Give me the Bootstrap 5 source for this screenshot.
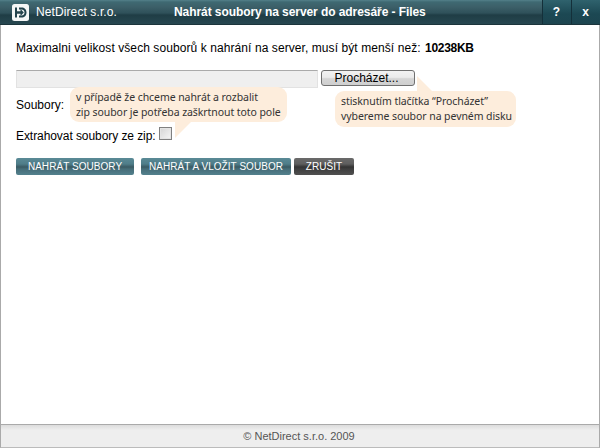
<!DOCTYPE html>
<html lang="cs"><head><meta charset="utf-8"><title>Nahrát soubory</title>
<link href="https://cdn.jsdelivr.net/npm/bootstrap@5.3.0/dist/css/bootstrap.min.css" rel="stylesheet">
<style>
html,body{height:448px;overflow:hidden;}
body{font-family:"Liberation Sans",Arial,sans-serif;font-size:12px;line-height:14px;color:#000;background:#fff;}
.shell{height:448px;}
.topbar{height:25px;flex:none;color:#fff;background:linear-gradient(#54808a 0,#3f6972 2px,#3c5f68 7px,#2f515a 13px,#1f3d45 15px,#274750 24px);border-bottom:1px solid #1c353c;}
.logo-box{width:17px;height:17px;margin:4px 0 0 12px;flex:none;}
.brand{margin-left:7px;width:124px;flex:none;line-height:24px;font-size:12px;letter-spacing:.1px;}
.win-title{font-weight:700;line-height:24px;margin-left:14px;font-size:12px;letter-spacing:-.07px;white-space:nowrap;}
.ctl{width:29px;flex:none;line-height:24px;padding-right:1px;text-align:center;font-weight:700;font-size:12px;background:linear-gradient(#2f626d,#1c4853 14px,#1d4550);border-left:1px solid #14303a;}
.mainarea{flex:1;border-left:1px solid #aaa;border-right:1px solid #aaa;padding:16px 15px 0;position:relative;}
.limit{height:14px;letter-spacing:.08px;white-space:nowrap;}
.limit b{margin-left:1px;letter-spacing:-.3px;}
.filefield{margin-top:15px;height:18px;}
.fakeinput{width:302px;height:18px;background:#efefef;border:1px solid #e2e2e2;border-top:1px solid #aaa;}
.browse{width:94px;height:16px;margin-left:3px;padding:0 3px 0 0;border:1px solid #707070;border-radius:3px;font-size:12px;line-height:13px;color:#000;background:linear-gradient(#f2f2f2,#ebebeb 45%,#d5d5d5 55%,#cfcfcf);}
.row-lbl{margin-top:10px;height:14px;}
.row-ext{margin-top:17px;height:14px;align-items:center;letter-spacing:-.07px;}
.fakecheck{width:13px;height:13px;margin:-5px 0 0 3px;border:1px solid #808080;background:linear-gradient(135deg,#d4d4d4,#f6f6f6);box-shadow:inset 0 0 0 1px #e4e4e4;}
.actions{margin-top:15px;gap:7px;}
.actbtn{height:17px;padding:0;border:0;border-radius:2px;color:#fff;font-size:10px;letter-spacing:.05px;line-height:17px;text-align:center;white-space:nowrap;}
.teal{background:linear-gradient(#5a8a96,#4f7d89 6px,#3a5a63 9px,#466d78 11px,#53818d 17px);}
.grey{background:linear-gradient(#6a6a6a,#5e5e5e 6px,#333 9px,#3e3e3e 11px,#505050 17px);}
.b1{width:118px}.b2{width:150px;margin-right:-4px}.b3{width:60px}
.bubble{position:absolute;background:#fdeddc;border-radius:9px;font-family:"Noto Sans",sans-serif;font-size:10.5px;letter-spacing:-.07px;line-height:15px;color:#333;padding:3px 6px;white-space:nowrap;}
.bubble-a{left:69px;top:62px;width:217px;height:35px;}
.bubble-b{left:334px;top:66px;width:181px;height:36px;}
.tail{position:absolute;display:block;overflow:visible;}
.tail-a{left:105px;top:35px;}
.tail-b{left:82px;top:-15px;}
.footbar{height:24px;flex:none;padding-right:2px;background:linear-gradient(#dcdcdc,#eee 5px);border:1px solid #aaa;border-bottom-color:#bbb;text-align:center;font-size:11px;line-height:22px;color:#555;}
</style></head>
<body>
<div class="shell d-flex flex-column">
  <div class="topbar d-flex">
    <svg class="logo-box" viewBox="0 0 17 17" aria-hidden="true"><rect width="17" height="17" rx="2.5" fill="#f4f6f6"/><path d="M3 3.500h2v10H3zM7 3.500h2.500c3 0 5 2 5 5s-2 5-5 5H7v-2h2.500c1.800 0 3-1.300 3-3s-1.200-3-3-3H7z" fill="#23434c"/><path d="M5 7.300h3.500V5l3.300 3.500-3.300 3.500V9.700H5z" fill="#23434c"/></svg>
    <div class="brand">NetDirect s.r.o.</div>
    <div class="win-title flex-grow-1">Nahrát soubory na server do adresáře - Files</div>
    <div class="ctl">?</div>
    <div class="ctl">x</div>
  </div>
  <div class="mainarea">
    <div class="limit">Maximalni velikost všech souborů k nahrání na server, musí být menší než: <b>10238KB</b></div>
    <div class="filefield d-flex align-items-start">
      <div class="fakeinput"></div>
      <button type="button" class="browse">Procházet...</button>
    </div>
    <div class="row-lbl">Soubory:</div>
    <div class="row-ext d-flex">Extrahovat soubory ze zip: <span class="fakecheck d-block"></span></div>
    <div class="actions d-flex">
      <button type="button" class="actbtn teal b1">NAHRÁT SOUBORY</button>
      <button type="button" class="actbtn teal b2">NAHRÁT A VLOŽIT SOUBOR</button>
      <button type="button" class="actbtn grey b3">ZRUŠIT</button>
    </div>
    <div class="bubble bubble-a">v případě že chceme nahrát a rozbalit<br>zip soubor je potřeba zaškrtnout toto pole
      <svg class="tail tail-a" width="16" height="17" aria-hidden="true"><path d="M0 0H16L0 16Z" fill="#fdeddc"/></svg>
    </div>
    <div class="bubble bubble-b">stisknutím tlačítka “Procházet”<br>vybereme soubor na pevném disku
      <svg class="tail tail-b" width="20" height="16" aria-hidden="true"><path d="M0 0L15 15H0Z" fill="#fdeddc"/></svg>
    </div>
  </div>
  <div class="footbar">© NetDirect s.r.o. 2009</div>
</div>
</body></html>
